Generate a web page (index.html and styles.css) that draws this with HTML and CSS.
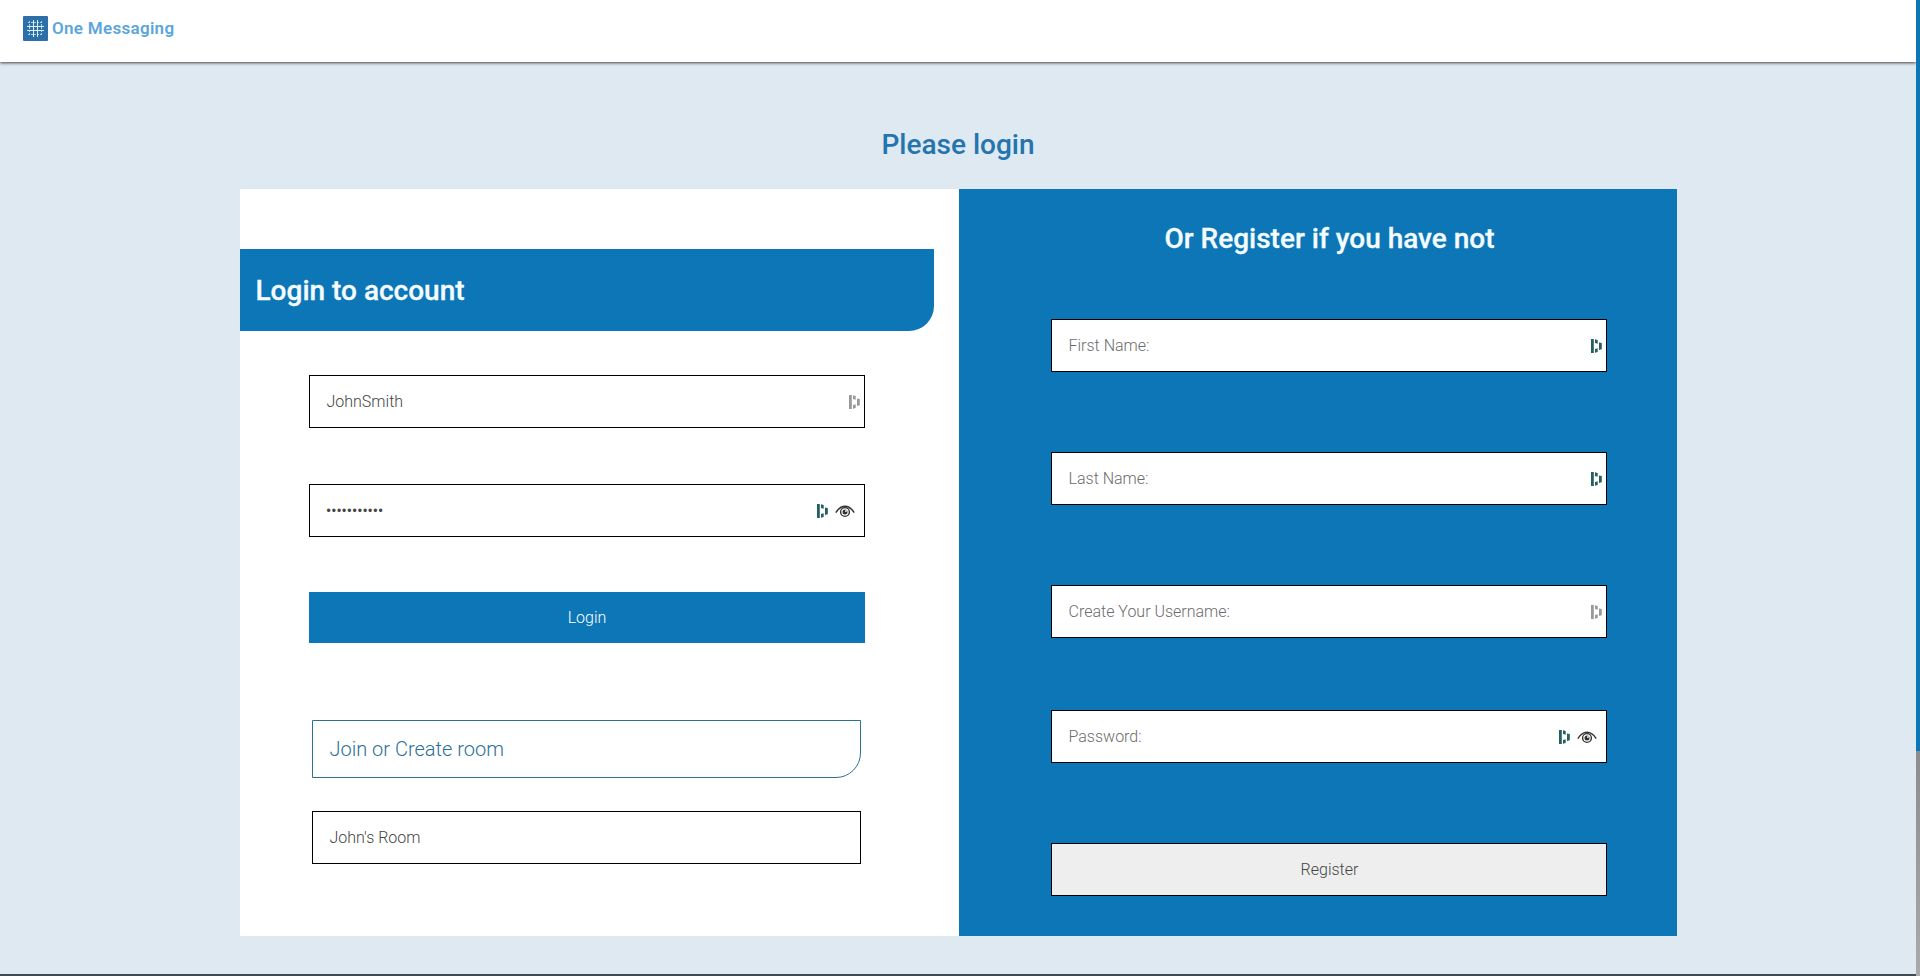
FILE: index.html
```html
<!DOCTYPE html>
<html lang="en">
<head>
<meta charset="utf-8">
<title>One Messaging</title>
<link rel="stylesheet" href="styles.css">
</head>
<body>
<svg class="symbols" width="0" height="0" aria-hidden="true">
  <symbol id="key" viewBox="0 0 11 14">
    <path fill="currentColor" d="M0 0h2.800v14H0zM4 .2l2.700.7v3.900L4 4.100zM4 9.900l2.700-.7v3.900L4 13.800zM8 3.400l2.800.7v6.200L8 11z"/>
  </symbol>
  <symbol id="eye" viewBox="0 0 20 14">
    <g fill="none" stroke="#333">
      <path stroke-width="1.400" d="M.8 8.600C4 3.600 7 2.300 10 2.300S16 3.600 19.200 8.600"/>
      <circle cx="10" cy="8" r="4.400" stroke-width="1.400"/>
    </g>
    <circle cx="10" cy="8" r="2.500" fill="#333"/>
    <circle cx="11" cy="7" r=".9" fill="#fff"/>
  </symbol>
</svg>
<div class="page">
  <header class="topbar">
    <svg class="logo" viewBox="0 0 25 25">
      <rect width="25" height="25" rx="1" fill="#2f6fa7"/>
      <g stroke="#a9d3e8" stroke-width="1" fill="none">
        <path stroke-dasharray="2 1" d="M6.500 5v15M18.500 5v15M5 6.500h15M5 18.500h15"/>
        <path stroke="#d8f0f5" d="M10.500 4v17M14.500 4v17M4 10.500h17M4 14.500h17"/>
      </g>
    </svg>
    <span class="brand">One Messaging</span>
  </header>
  <main class="main">
    <h1 class="title">Please login</h1>
    <div class="panel">
      <section class="login">
        <h2 class="banner">Login to account</h2>
        <div class="login-form">
          <div class="field"><span class="value">JohnSmith</span><svg class="key muted"><use href="#key"/></svg></div>
          <div class="field with-eye"><span class="dots">•••••••••••</span><svg class="key"><use href="#key"/></svg><svg class="eye"><use href="#eye"/></svg></div>
          <button class="login-btn">Login</button>
        </div>
        <div class="room">
          <div class="room-title">Join or Create room</div>
          <div class="field"><span class="value">John's Room</span></div>
        </div>
      </section>
      <section class="register">
        <h2 class="register-title">Or Register if you have not</h2>
        <div class="register-form">
          <div class="field"><span class="hint">First Name:</span><svg class="key"><use href="#key"/></svg></div>
          <div class="field"><span class="hint">Last Name:</span><svg class="key"><use href="#key"/></svg></div>
          <div class="field"><span class="hint">Create Your Username:</span><svg class="key muted"><use href="#key"/></svg></div>
          <div class="field with-eye last"><span class="hint">Password:</span><svg class="key"><use href="#key"/></svg><svg class="eye"><use href="#eye"/></svg></div>
          <button class="field register-btn">Register</button>
        </div>
      </section>
    </div>
  </main>
</div>
<div class="scrollbar"><div class="thumb"></div></div>
</body>
</html>
```

FILE: styles.css
```css
* { box-sizing: border-box; }
body {
  margin: 0;
  height: 976px;
  display: flex;
  overflow: hidden;
  font-family: Roboto, "Liberation Sans", sans-serif;
  font-weight: 300;
  background: #dfe9f1;
}
h1, h2 { margin: 0; }
.symbols { display: none; }
.page {
  flex: 1;
  display: flex;
  flex-direction: column;
  border-bottom: 2px solid #414a4e;
}
.scrollbar { width: 4px; background: linear-gradient(#8c8c8c 77%, #aaa); }
.thumb { height: 751px; background: #0c76b7; }
.topbar {
  height: 62px;
  padding: 16px 0 0 23px;
  display: flex;
  align-items: flex-start;
  gap: 4px;
  background: #fff;
  box-shadow: 0 1px 3px #444;
}
.logo { width: 25px; height: 25px; }
.brand { color: #5ba6dc; font-size: 17px; font-weight: 600; line-height: 25px; letter-spacing: .3px; }
.main { padding: 66px 240px 0 240px; }
.title {
  height: 61px;
  line-height: 33px;
  text-align: center;
  font-size: 28px;
  font-weight: 500;
  color: #2474ad;
}
.panel { height: 747px; margin-right: -1px; display: flex; background: #fff; }
.login { width: 719px; padding-top: 60px; }
.banner {
  width: 694px;
  height: 82px;
  padding-left: 15.5px;
  line-height: 83px;
  border-bottom-right-radius: 25px;
  background: #0c76b7;
  color: #f4fcff;
  font-size: 28px;
  font-weight: 500;
  -webkit-text-stroke: .3px #f4fcff;
}
.login-form {
  width: 556px;
  margin: 44px 0 0 69px;
  display: flex;
  flex-direction: column;
}
.login-form .field { margin-bottom: 56px; }
.login-form .with-eye { margin-bottom: 55px; }
.field {
  height: 53px;
  padding: 0 4px 0 16.5px;
  display: flex;
  align-items: center;
  border: 1px solid #000;
  background: #fff;
  font-size: 16px;
}
.with-eye { padding-right: 9px; }
.value, .hint, .dots { flex: 1; }
.value { color: #444; }
.hint { color: #6c6c6c; }
.dots { color: #444; font: 12px "Liberation Sans", sans-serif; letter-spacing: 1px; }
.key { width: 11px; height: 14px; color: #256060; }
.muted { color: #999; }
.eye { width: 20px; height: 14px; margin-left: 7px; }
.login-btn {
  height: 51px;
  padding: 0;
  border: 0;
  background: #0c76b7;
  color: #fff;
  font: 300 16px Roboto, sans-serif;
}
.room { width: 549px; margin: 77px 0 0 72px; }
.room-title {
  height: 58px;
  margin-bottom: 33px;
  padding-left: 16.5px;
  line-height: 56px;
  border: 1px solid #2c7191;
  border-bottom-right-radius: 25px;
  color: #2b7096;
  font-size: 20px;
}
.register { flex: 1; padding-top: 33px; background: #0c76b7; }
.register-title {
  margin-left: 23px;
  text-align: center;
  line-height: 33px;
  font-size: 28px;
  font-weight: 500;
  color: #f4fcff;
  -webkit-text-stroke: .3px #f4fcff;
}
.register-form {
  width: 556px;
  margin: 64px 0 0 92px;
  display: flex;
  flex-direction: column;
  gap: 80px;
}
.register-form .last { margin-top: -8px; }
.register-btn {
  justify-content: center;
  padding: 0 0 0 1px;
  background: #eee;
  color: #444;
  font: 300 16px Roboto, sans-serif;
}
```
